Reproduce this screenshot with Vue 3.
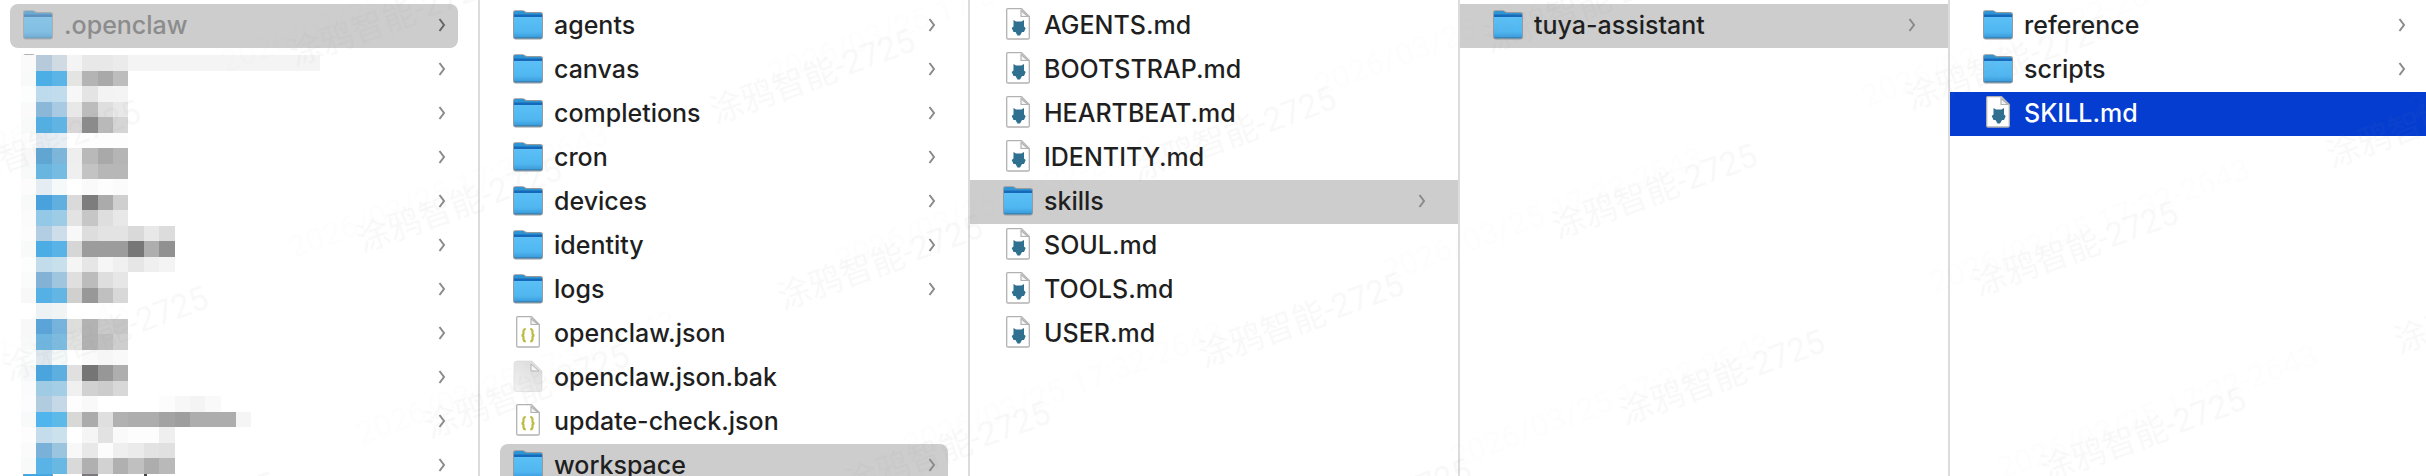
<template>
  <main class="finder">
    <nav
      v-for="column in columns"
      :key="column.name"
      class="column"
      :class="{ inset: column.inset }"
      :aria-label="column.name"
    >
      <ul class="list">
        <li v-for="(item, index) in column.items" :key="index">
          <button type="button" class="row" :class="item.state">
            <svg v-if="item.kind === 'folder'" class="icon" viewBox="0 -1 32 36" aria-hidden="true">
              <path d="M1 4.5Q1 2.3 3 2.3H10.5Q12 2.3 13 3.2T15.5 4H28.500Q31 4 31 6.500V29Q31 31.400 28.500 31.400H3.500Q1 31.400 1 29Z" fill="#969a9e" />
              <path d="M2 5Q2 3 4 3H10.500Q11.600 3 12.500 4T15 5H28Q30 5 30 7V12H2Z" fill="#2f94d4" />
              <path d="M2 6.500H30V11H2Z" fill="#1668b8" />
              <path d="M2 9H30V28.500Q30 30.300 28 30.300H4Q2 30.300 2 28.500Z" fill="url(#folder-front)" />
              <path d="M2.500 29.700H29.500" stroke="#3a7fb0" stroke-width="1" />
            </svg>

            <svg v-else-if="item.kind === 'plain'" class="icon" viewBox="0 -1 32 36" aria-hidden="true">
              <path d="M5 1H20L30 11V29Q30 31.500 27.500 31.500H4.500Q2 31.500 2 29V4Q2 1 5 1Z" fill="url(#plain-page)" stroke="#d8d8d8" stroke-width="0.6" />
              <path d="M19 4V11H27Z" fill="#f8f8f8" stroke="#b4b4b4" stroke-width="1" />
            </svg>

            <svg v-else class="icon" viewBox="0 -1 32 36" aria-hidden="true">
              <path d="M5.500 0.700H19.500L27.300 8.500V29.700Q27.300 31 26 31H6Q4.700 31 4.700 29.700V2Q4.700 0.700 5.500 0.700Z" fill="#fff" stroke="#b2b2b2" stroke-width="1.300" />
              <path d="M19 2.500V8.500H26Z" fill="#f4f4f4" stroke="#b2b2b2" stroke-width="1.200" />
              <g v-if="item.kind === 'json'" fill="none" stroke="#b9bc45" stroke-width="2.200">
                <path d="M13.800 13Q11.500 13 11.500 15.500V17.500Q11.500 19.200 9.500 19.300Q11.500 19.400 11.500 21V23Q11.500 25.500 13.800 25.500" />
                <path d="M18.200 13Q20.500 13 20.500 15.500V17.500Q20.500 19.200 22.500 19.300Q20.500 19.400 20.500 21V23Q20.500 25.500 18.200 25.500" />
              </g>
              <path v-else d="M11.500 12L14 13.500H19.500L22 12V18.500L23.700 20L22 24H20L18 27.500H15.500L13.500 24H11.500L9.700 20L11.500 18.500Z" fill="#2f6f8f" />
            </svg>

            <span class="name">{{ item.name }}</span>

            <svg v-if="item.kind === 'folder'" class="chevron" viewBox="0 0 8 14" aria-hidden="true">
              <path d="M1.500 1L6 7L1.500 13" />
            </svg>
          </button>
        </li>
      </ul>

      <!-- pixelated cover over the private folder names -->
      <svg v-if="column.masked" class="mosaic" viewBox="0 0 20 27" preserveAspectRatio="none" aria-hidden="true">
        <rect width="20" height="27" fill="#fff" />
        <rect x="7" width="12.500" height="1" fill="#f4f4f4" />
        <template v-for="(line, y) in mosaic" :key="y">
          <rect v-for="(fill, x) in line" :key="x" :x="x" :y="y" width="1" height="1" :fill="fill" />
        </template>
        <rect x="4" y="27" width="1" height="0.130" fill="#7d7a7d" />
        <rect x="8" y="27" width="0.200" height="0.130" fill="#444" />
      </svg>
    </nav>

    <svg class="watermark" aria-hidden="true">
      <defs>
        <linearGradient id="folder-front" x1="0" y1="0" x2="0" y2="1">
          <stop offset="0" stop-color="#5cc0f6" />
          <stop offset="0.700" stop-color="#4fb6f0" />
          <stop offset="1" stop-color="#3698d8" />
        </linearGradient>
        <linearGradient id="plain-page" x1="1" y1="0" x2="0.300" y2="1">
          <stop offset="0" stop-color="#d9d9d9" />
          <stop offset="1" stop-color="#f0f0f0" />
        </linearGradient>
        <pattern id="mark-name" width="376" height="198" patternUnits="userSpaceOnUse" patternTransform="translate(1518 189) rotate(-20)">
          <text x="20" y="60" class="mark">涂鸦智能-2725</text>
        </pattern>
        <pattern id="mark-date" width="510" height="198" patternUnits="userSpaceOnUse" patternTransform="translate(1827 58) rotate(-20)">
          <text x="20" y="60" class="mark faint">2026/03/25 17:32-2643</text>
        </pattern>
      </defs>
      <rect width="100%" height="100%" fill="url(#mark-date)" />
      <rect width="100%" height="100%" fill="url(#mark-name)" />
    </svg>
  </main>
</template>

<script setup>
const folder = (name, state = '') => ({ name, kind: 'folder', state })
const file = (name, kind = 'md', state = '') => ({ name, kind, state })

const columns = [
  {
    name: 'Home',
    inset: true,
    masked: true,
    items: [
      folder('.openclaw', 'open dimmed'),
      ...Array.from({ length: 10 }, () => folder(''))
    ]
  },
  {
    name: '.openclaw',
    inset: true,
    items: [
      folder('agents'),
      folder('canvas'),
      folder('completions'),
      folder('cron'),
      folder('devices'),
      folder('identity'),
      folder('logs'),
      file('openclaw.json', 'json'),
      file('openclaw.json.bak', 'plain'),
      file('update-check.json', 'json'),
      folder('workspace', 'open')
    ]
  },
  {
    name: 'workspace',
    items: [
      file('AGENTS.md'),
      file('BOOTSTRAP.md'),
      file('HEARTBEAT.md'),
      file('IDENTITY.md'),
      folder('skills', 'open'),
      file('SOUL.md'),
      file('TOOLS.md'),
      file('USER.md')
    ]
  },
  {
    name: 'skills',
    items: [folder('tuya-assistant', 'open')]
  },
  {
    name: 'tuya-assistant',
    items: [
      folder('reference'),
      folder('scripts'),
      file('SKILL.md', 'md', 'selected')
    ]
  }
]

const mosaic = [
  'fafafa b7cadb d0dae3 f4f4f4 e8e8e8 e8e8e8 ebebeb',
  'f7faf9 4baee4 5bb4e6 e4e4e2 b4b4b4 a9a9a9 bdbdbd',
  'fcfdfd bddbed c1dcec f7f7f7 e4e4e4 f3f3f3 f4f4f4',
  'fafafa 8bb7d8 a8cae2 e8e8e8 bcbcbc dedede e8e8e8',
  'f7faf9 53aee2 5fb4e4 d8d6d6 8b8b8b b9b9b9 d5d5d5',
  'fdfdfd e5ecf2 e8eff4 ffffff fdfdfd fdfdfd fdfdfd',
  'f8f8f8 60a6d3 7db6db eeeeee b9b9b9 a9a9a9 b5b5b5',
  'f8faf9 68b5e0 75bbe2 efefef c3c3c3 b7b7b7 b7b7b7',
  'fcfcfc e5edf3 f6f9f9 ffffff fafafa fdfdfd fbfbfb',
  'f7faf9 4aa2dc 60afde dadada 7d7d7d ababab cfcfcf',
  'fbfbfb 93c8e6 9dcce6 e3e3e3 c6c6c6 dedede e8e8e8',
  'fcfcfc b3cee2 cddde9 f8f8f8 dddddd e3e3e3 e3e3e3 d9d9d9 e8e8e8 dcdcdc',
  'f7faf9 4cade4 5ab3e6 d6d6d6 9c9c9c 9c9c9c 9c9c9c 777777 aeaeae 919191',
  'fcfefe c3dcec c8e0ec f5f5f5 e6e6e6 f6f6f6 f0f0f0 e6e6e6 efefef f4f4f4',
  'fafcfb 84b1d6 a0c6df dfdfdf bcbcbc dedede e6e6e6',
  'f8f8f8 55b0e5 63b5e4 d0d0ce 989898 c0c0c0 d8d8d8',
  'ffffff edf3f5 f0f4f5',
  'f8f8f8 5ba4d8 76b3dc dededc b2b2b2 cacaca c6c6c6',
  'f7faf9 6eb6e0 7cbbe0 e2e2e0 b1b1b1 bfbfbf cecece',
  'fcfdfd dde7ed f3f8f8 ffffff fafafa f6f6f6 f9f9f9',
  'f7f8fa 4aa4de 5dafdf e0e0e0 757575 979797 aeaeae',
  'fbfbfd 9fcbe5 a4cee6 f0f0f0 d1d1d1 cccccc d8d8d8',
  'fcfcfe b1cbdf c5d8e7 fdfdfd f9f9f9 ffffff ffffff ffffff ffffff fcfcfc f7f7f7 f4f4f4 f9f9f9',
  'f7faf9 4fb5ec 5cb9e8 d8d8d6 ababab dfdfdf b1b1b1 adadad adadad a3a3a3 9e9e9e adadad adadad adadad f5f5f5',
  'fdfdfd c4dceb cbe1ec ffffff f5f5f5 e2e2e2 fafafa fdfdfd fdfdfd efefef',
  'fbfbfb 7ab1d8 9bc5df f8f8f8 e8e8e8 fcfcfc efefef ebebeb e3e3e3 e0e0e0',
  'f7faf9 5ab3e6 67b9e4 d9d9d9 b0b0b0 d2d2d2 b0b0b0 c0c0c0 adadad b9b9b9'
].map((line) => line.split(' ').map((hex) => '#' + hex))
</script>

<style>
body {
  margin: 0;
  background: #fff;
}
</style>

<style scoped>
.finder {
  position: relative;
  display: grid;
  grid-template-columns: 480fr 490fr 490fr 490fr 476fr;
  height: 100vh;
  overflow: hidden;
  font-family: Inter, "Noto Sans CJK SC", sans-serif;
}

.column {
  position: relative;
  min-width: 0;
  overflow: hidden;
  border-right: 2px solid #dcdcdc;
}

.column:last-of-type {
  border-right: none;
}

.list {
  margin: 0;
  padding: 4px 0 0;
  list-style: none;
}

.inset .list {
  padding: 4px 20px 0;
}

.inset:first-child .list {
  padding-left: 10px;
}

.row {
  display: flex;
  align-items: center;
  gap: 10px;
  width: 100%;
  height: 44px;
  padding: 0 32px 2px;
  border: none;
  background: none;
  color: #1f1f1f;
  font: inherit;
  font-size: 25px;
  font-weight: 500;
  line-height: 32px;
  text-align: left;
}

.inset .row {
  padding: 0 12px 2px;
  border-radius: 8px;
}

.column:last-of-type .row {
  padding-right: 20px;
}

.row.open {
  background: #cdcdcd;
}

.row.selected {
  background: #043dd0;
  color: #fff;
}

.row.dimmed {
  color: #8c8c8c;
}

.row.dimmed .icon {
  opacity: 0.6;
}

.icon {
  flex: none;
  width: 32px;
  height: 36px;
}

.name {
  flex: 1;
  min-width: 0;
  white-space: nowrap;
}

.chevron {
  flex: none;
  width: 8px;
  height: 14px;
  fill: none;
  stroke: #8a8a8a;
  stroke-width: 2;
}

.dimmed .chevron {
  stroke: #666;
}

.mosaic {
  position: absolute;
  top: 55px;
  left: 21px;
  width: 307px;
  height: 419px;
  overflow: visible;
  shape-rendering: crispEdges;
}

.watermark {
  position: absolute;
  inset: 0;
  width: 100%;
  height: 100%;
  pointer-events: none;
}

.mark {
  fill: rgba(128, 128, 128, 0.06);
  font-family: Roboto, "Noto Sans CJK SC", sans-serif;
  font-size: 33px;
}

.mark.faint {
  fill: rgba(128, 128, 128, 0.02);
  font-size: 32px;
}
</style>
